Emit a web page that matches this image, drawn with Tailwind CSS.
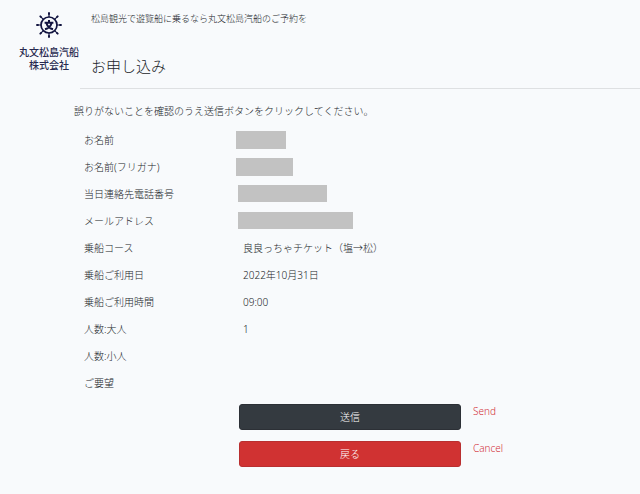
<!DOCTYPE html>
<html lang="ja">
<head>
    <meta charset="UTF-8">
    <meta name="viewport" content="width=device-width, initial-scale=1.0">
    <title>お申し込み</title>
    <script src="https://cdn.jsdelivr.net/npm/@tailwindcss/browser@4"></script>
</head>
<body class="min-h-screen bg-[#f8fafc] font-['Noto_Sans','Noto_Sans_CJK_JP',sans-serif] text-[10px] leading-4 font-light text-[#212529]">
    <header class="flex">
        <a href="#" class="flex w-20 shrink-0 flex-col items-end pt-3 text-center text-[10px] leading-[13px] font-medium text-[#27294f]">
            <span class="flex w-[62px] flex-col items-center whitespace-nowrap">
                <!-- ship wheel -->
                <svg class="mb-2 size-[26px]" viewBox="0 0 26 26" fill="none" stroke="#11133f" aria-hidden="true">
                    <circle cx="13" cy="13" r="8" stroke-width="1.7"/>
                    <path stroke-width="1.2" d="M13 5V1M13 21V25M5 13H1M21 13H25M7.3 7.3L4.4 4.4M18.7 7.3L21.6 4.4M7.3 18.7L4.4 21.6M18.7 18.7L21.6 21.6"/>
                    <path stroke-width="1.9" stroke-linecap="round" d="M13 1V2M13 24V25M1 13H2M24 13H25M4.3 4.3L4.9 4.9M21.7 4.3L21.1 4.9M4.3 21.7L4.9 21.1M21.7 21.7L21.1 21.1"/>
                    <path stroke-width="2" d="M13 8V10.4M8.6 10.7H17.4M15.6 11C14.9 13.8 12.6 16.2 9 17.3M10.4 11C11.1 13.8 13.4 16.2 17 17.3"/>
                </svg>
                <span>丸文松島汽船</span>
                <span>株式会社</span>
            </span>
        </a>
        <div class="flex-1 border-b border-[#dee0e2] pt-[11px] pb-[10px] pl-[11px]">
            <p class="text-[9px]">松島観光で遊覧船に乗るなら丸文松島汽船のご予約を</p>
            <h1 class="mt-[27px] text-[15px] leading-6">お申し込み</h1>
        </div>
    </header>

    <main class="pl-[74px]">
        <p class="pt-[14px] pb-[7px]">誤りがないことを確認のうえ送信ボタンをクリックしてください。</p>

        <table class="w-full text-left">
            <tbody>
                <tr class="h-[27px]">
                    <th scope="row" class="w-[162px] pl-[10px] font-light">お名前</th>
                    <td><div class="h-[18px] w-[50px] bg-[#c2c2c2]"></div></td>
                </tr>
                <tr class="h-[27px]">
                    <th scope="row" class="pl-[10px] font-light">お名前(フリガナ)</th>
                    <td><div class="h-[18px] w-[57px] bg-[#c2c2c2]"></div></td>
                </tr>
                <tr class="h-[27px]">
                    <th scope="row" class="pl-[10px] font-light">当日連絡先電話番号</th>
                    <td class="pl-[2px]"><div class="h-[17px] w-[89px] bg-[#c2c2c2]"></div></td>
                </tr>
                <tr class="h-[27px]">
                    <th scope="row" class="pl-[10px] font-light">メールアドレス</th>
                    <td class="pl-[2px]"><div class="h-[17px] w-[115px] bg-[#c2c2c2]"></div></td>
                </tr>
                <tr class="h-[27px]">
                    <th scope="row" class="pl-[10px] font-light">乗船コース</th>
                    <td class="pl-[7px]">良良っちゃチケット（塩→松）</td>
                </tr>
                <tr class="h-[27px]">
                    <th scope="row" class="pl-[10px] font-light">乗船ご利用日</th>
                    <td class="pl-[7px]">2022年10月31日</td>
                </tr>
                <tr class="h-[27px]">
                    <th scope="row" class="pl-[10px] font-light">乗船ご利用時間</th>
                    <td class="pl-[7px]">09:00</td>
                </tr>
                <tr class="h-[27px]">
                    <th scope="row" class="pl-[10px] font-light">人数:大人</th>
                    <td class="pl-[7px]">1</td>
                </tr>
                <tr class="h-[27px]">
                    <th scope="row" class="pl-[10px] font-light">人数:小人</th>
                    <td class="pl-[7px]"></td>
                </tr>
                <tr class="h-[27px]">
                    <th scope="row" class="pl-[10px] font-light">ご要望</th>
                    <td class="pl-[7px]"></td>
                </tr>
            </tbody>
        </table>

        <form class="grid grid-cols-[222fr_179fr] gap-y-[11px] pt-2 pl-[165px]" onsubmit="return false">
            <button type="submit" id="send" class="h-[26px] rounded-[3px] border border-[#2c3036] bg-[#343a40] text-white">送信</button>
            <label for="send" class="pl-3 leading-[14px] text-[#d3303a]">Send</label>
            <button type="button" id="cancel" class="h-[26px] rounded-[3px] border border-[#b92f30] bg-[#d03232] text-white">戻る</button>
            <label for="cancel" class="pl-3 leading-[14px] text-[#d3303a]">Cancel</label>
        </form>
    </main>
</body>
</html>
